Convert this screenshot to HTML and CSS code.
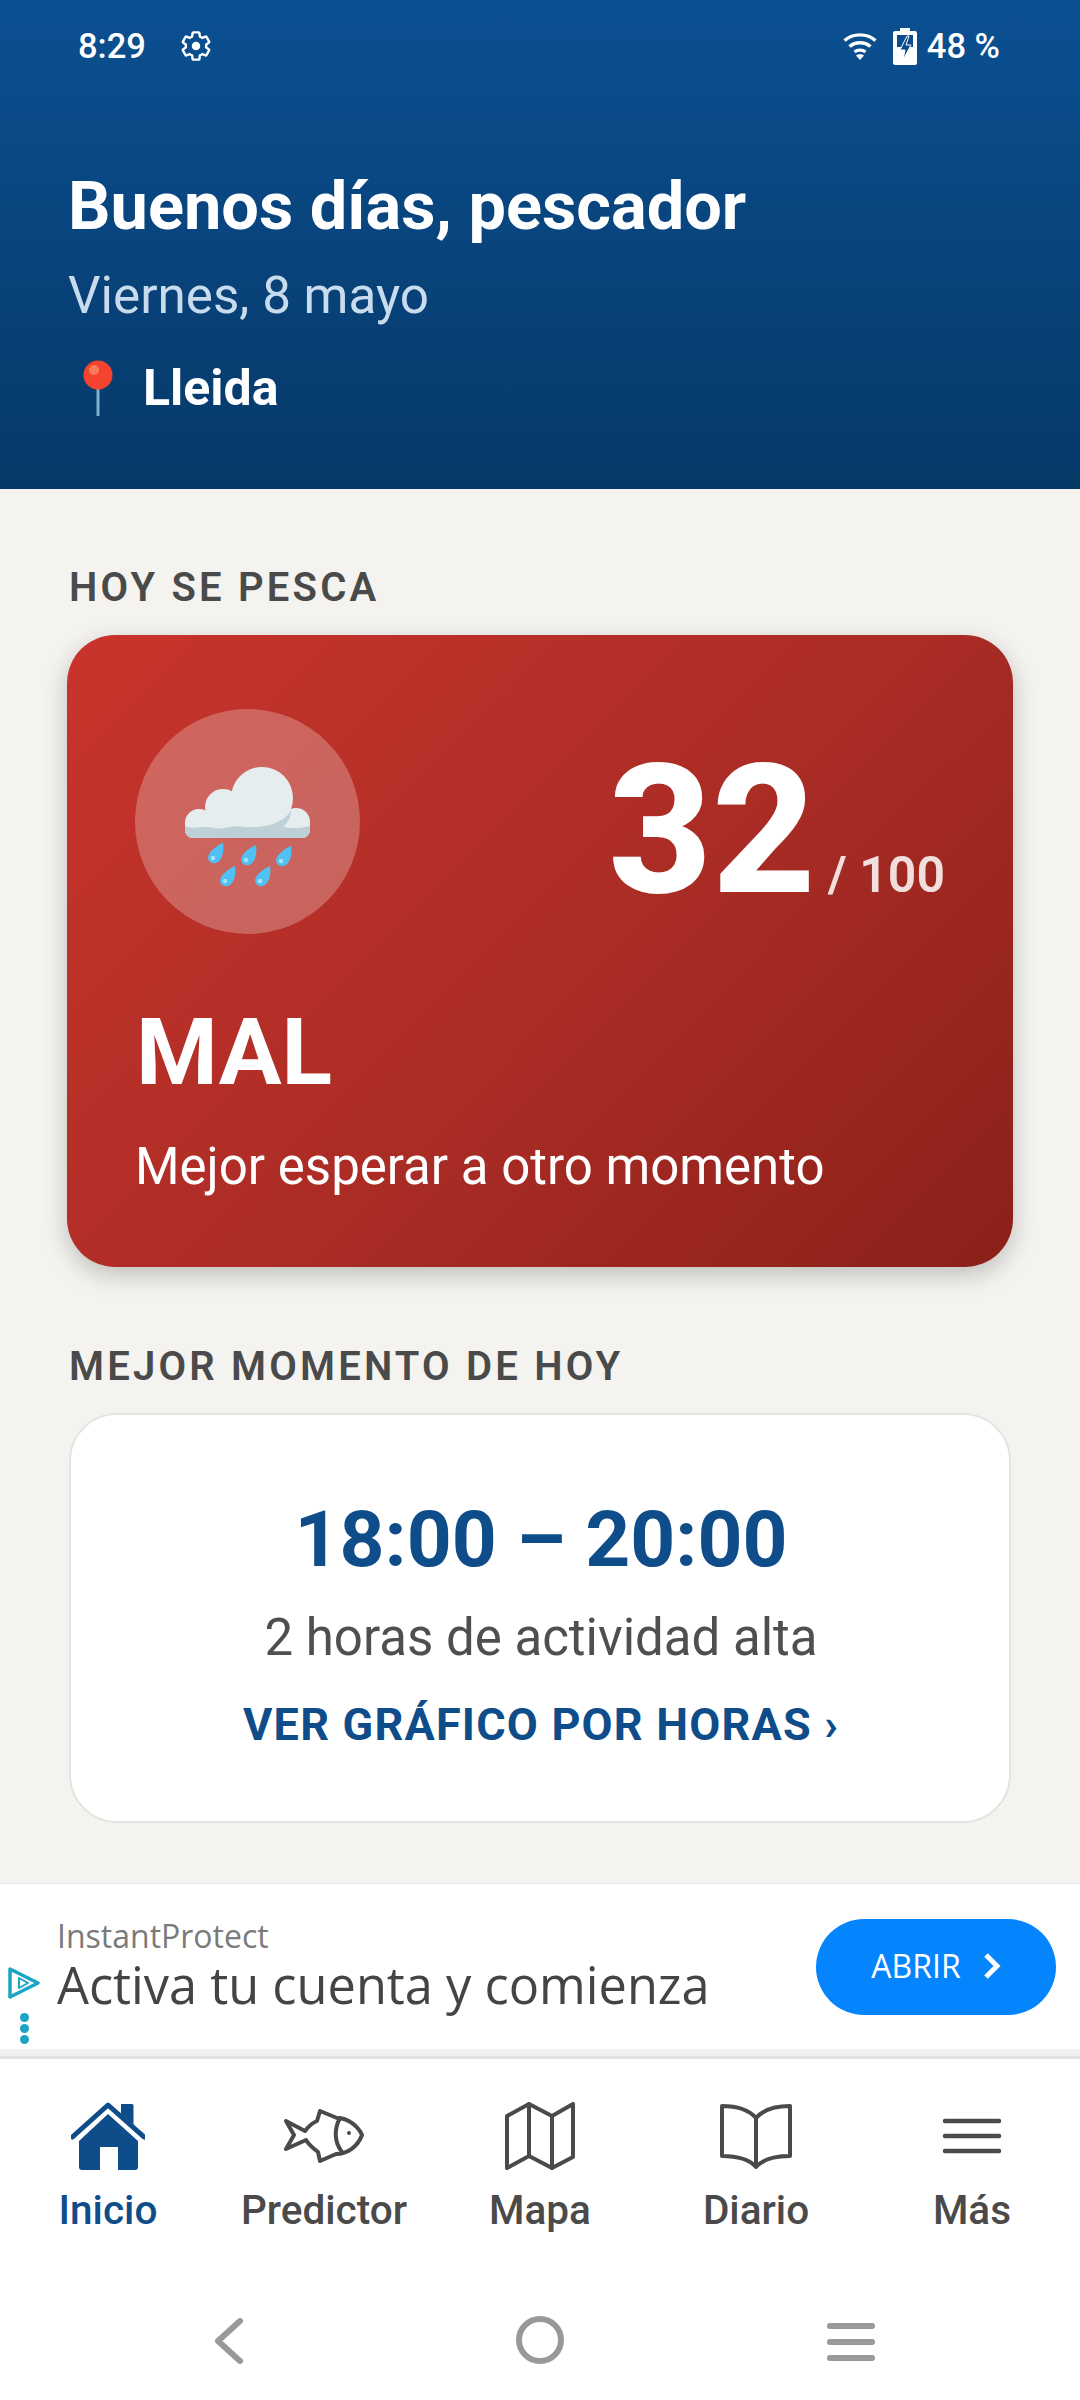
FILE: index.html
```html
<!DOCTYPE html>
<html lang="es">
<head>
  <meta charset="UTF-8" />
  <meta name="viewport" content="width=1080, height=2400" />
  <title>Inicio</title>
  <link rel="stylesheet" href="styles.css">
</head>
<body>
<div class="app">

  <!-- header with status bar -->
  <header class="top">
    <div class="status">
      <div class="status-left">
        <span class="clock">8:29</span>
        <svg class="gear" viewBox="0 0 24 24" fill="none" stroke="currentColor" stroke-width="1.7" stroke-linejoin="round">
          <path d="M19.14 12.94c.04-.3.06-.61.06-.94 0-.32-.02-.64-.07-.94l2.03-1.58c.18-.14.23-.41.12-.61l-1.92-3.32c-.12-.22-.37-.29-.59-.22l-2.39.96c-.5-.38-1.03-.7-1.62-.94l-.36-2.54c-.04-.24-.24-.41-.48-.41h-3.84c-.24 0-.43.17-.47.41l-.36 2.54c-.59.24-1.13.57-1.62.94l-2.39-.96c-.22-.08-.47 0-.59.22L2.74 8.87c-.12.21-.08.47.12.61l2.03 1.58c-.05.3-.09.63-.09.94s.02.64.07.94l-2.03 1.58c-.18.14-.23.41-.12.61l1.92 3.32c.12.22.37.29.59.22l2.39-.96c.5.38 1.03.7 1.62.94l.36 2.54c.05.24.24.41.48.41h3.84c.24 0 .44-.17.47-.41l.36-2.54c.59-.24 1.13-.56 1.62-.94l2.39.96c.22.08.47 0 .59-.22l1.92-3.32c.12-.22.07-.47-.12-.61l-2.01-1.58z"/>
          <circle cx="12" cy="12" r="3" fill="currentColor" stroke="none"/>
        </svg>
      </div>
      <div class="status-right">
        <svg class="wifi" viewBox="0 0 34 28" fill="none" stroke="currentColor" stroke-width="3.4">
          <path d="M1.5 8.5C10 1 24 1 32.5 8.5"/>
          <path d="M6.5 14.5C12.5 9.5 21.5 9.5 27.5 14.5"/>
          <path d="M11.5 20C14.5 17.5 19.5 17.5 22.5 20"/>
          <path d="M17 28l-4-4.5c2-1.6 6-1.6 8 0z" fill="currentColor" stroke="none"/>
        </svg>
        <svg class="battery" viewBox="0 0 24 37">
          <path d="M7 0h10v3h5a2 2 0 0 1 2 2v30a2 2 0 0 1-2 2H2a2 2 0 0 1-2-2V5a2 2 0 0 1 2-2h5z" fill="#fff"/>
          <rect x="4" y="7" width="16" height="12" fill="#0a4c8c"/>
          <path d="M14 8l-7 14h5l-2 10 8-15h-5l3-9z" fill="#0a4c8c" stroke="#fff" stroke-width="1"/>
        </svg>
        <span class="percent">48 %</span>
      </div>
    </div>

    <h1 class="greeting">Buenos días, pescador</h1>
    <p class="date">Viernes, 8 mayo</p>
    <p class="place">
      <svg class="pin" viewBox="0 0 38 56">
        <rect x="17.5" y="22" width="3" height="34" fill="#7fb2c9"/>
        <circle cx="19" cy="15" r="14.5" fill="#f4442e"/>
        <circle cx="15" cy="10" r="5" fill="#ff7a5c"/>
      </svg>
      <span>Lleida</span>
    </p>
  </header>

  <main class="content">
    <h2 class="section-label label-today">HOY SE PESCA</h2>
    <section class="score-card">
      <div class="score-top">
        <div class="weather-circle">
          <svg class="rain" viewBox="0 0 125 121">
            <defs>
              <g id="drop">
                <path d="M15 0C16 6 15 13 12 17 8 22 1 21 0 15 0 9 8 3 15 0z" fill="#4fc1f5"/>
                <circle cx="5" cy="15" r="2.2" fill="#a8e4fb"/>
              </g>
            </defs>
            <circle cx="77" cy="31" r="31" fill="#e6edef"/>
            <circle cx="38" cy="40" r="18" fill="#e6edef"/>
            <circle cx="14" cy="56" r="14" fill="#e6edef"/>
            <circle cx="111" cy="55" r="14" fill="#e6edef"/>
            <rect x="0" y="50" width="125" height="21" rx="8" fill="#e6edef"/>
            <path d="M0 59C8 63 20 58 28 61 40 63 48 57 60 60 78 61 96 58 106 44 106 51 102 56 98 60 108 62 118 61 125 59V63a8 8 0 0 1-8 8H8a8 8 0 0 1-8-8z" fill="#bcd0d5"/>
            <use href="#drop" x="23" y="76"/>
            <use href="#drop" x="56" y="78"/>
            <use href="#drop" x="91" y="79"/>
            <use href="#drop" x="35" y="99"/>
            <use href="#drop" x="70" y="99"/>
          </svg>
        </div>
        <div class="score">
          <span class="score-value">32</span>
          <span class="score-max">/ 100</span>
        </div>
      </div>
      <div class="verdict">MAL</div>
      <p class="verdict-note">Mejor esperar a otro momento</p>
    </section>

    <h2 class="section-label label-best">MEJOR MOMENTO DE HOY</h2>
    <section class="best-card">
      <div class="best-time">18:00 – 20:00</div>
      <p class="best-note">2 horas de actividad alta</p>
      <a class="best-link">VER GRÁFICO POR HORAS ›</a>
    </section>
  </main>

  <!-- ad banner -->
  <aside class="ad">
    <div class="ad-mark">
      <svg class="ad-play" viewBox="0 0 32 32" fill="none" stroke="#1aa5c4" stroke-width="3.5" stroke-linejoin="round">
        <path d="M2 2l28 14L2 30z"/>
        <path d="M11 11l9 5-9 5z" stroke-width="2"/>
      </svg>
      <span class="ad-dot"></span>
      <span class="ad-dot"></span>
      <span class="ad-dot"></span>
    </div>
    <div class="ad-text">
      <div class="ad-brand">InstantProtect</div>
      <div class="ad-title">Activa tu cuenta y comienza</div>
    </div>
    <a class="ad-btn">
      <span>ABRIR</span>
      <svg class="ad-chevron" viewBox="0 0 18 28" fill="none" stroke="#fff" stroke-width="5">
        <path d="M3 3l11 11L3 25"/>
      </svg>
    </a>
  </aside>
  <div class="ad-band"></div>

  <nav class="tabs">
    <a class="tab active">
      <span class="tab-icon">
        <svg class="i-house" viewBox="0 0 74 69">
          <path d="M1.5 35L37 3l36 32" fill="none" stroke="currentColor" stroke-width="5" stroke-linecap="round" stroke-linejoin="round"/>
          <path d="M50 2h11a1.5 1.5 0 0 1 1.5 1.5V23L50 12z" fill="currentColor"/>
          <path d="M37 12L67 39V65a3 3 0 0 1-3 3H47V45H29V68H11a3 3 0 0 1-3-3V39z" fill="currentColor"/>
        </svg>
      </span>
      <span class="tab-label">Inicio</span>
    </a>
    <a class="tab">
      <span class="tab-icon">
        <svg class="i-fish" viewBox="0 0 80 54" fill="none" stroke="currentColor" stroke-width="4" stroke-linejoin="round" stroke-linecap="round">
          <path d="M21 22L2 12 10 26 2 40 22 31C25 36 30 40 34 43L36 52 52 45C64 45 74 37 78 26 74 17 64 9 53 9L36 2 33 12C28 14 24 18 21 22z"/>
          <path d="M56 9C50 20 50 33 58 43"/>
          <circle cx="65" cy="24" r="2" fill="currentColor" stroke="none"/>
        </svg>
      </span>
      <span class="tab-label">Predictor</span>
    </a>
    <a class="tab">
      <span class="tab-icon">
        <svg class="i-map" viewBox="0 0 70 68" fill="none" stroke="currentColor" stroke-width="4" stroke-linejoin="round" stroke-linecap="round">
          <path d="M2 14L24 2 47 14 68 2V55L47 66 24 54 2 66z"/>
          <path d="M24 2V54M47 14V66"/>
        </svg>
      </span>
      <span class="tab-label">Mapa</span>
    </a>
    <a class="tab">
      <span class="tab-icon">
        <svg class="i-book" viewBox="0 0 74 65" fill="none" stroke="currentColor" stroke-width="4" stroke-linejoin="round" stroke-linecap="round">
          <path d="M37 14C30 6 18 2 3 2V52C18 52 30 55 37 63 44 55 56 52 71 52V2C56 2 44 6 37 14V63"/>
        </svg>
      </span>
      <span class="tab-label">Diario</span>
    </a>
    <a class="tab">
      <span class="tab-icon">
        <svg class="i-menu" viewBox="0 0 60 36" fill="none" stroke="currentColor" stroke-width="4.5" stroke-linecap="round">
          <path d="M3 3H57M3 18H57M3 33H57"/>
        </svg>
      </span>
      <span class="tab-label">Más</span>
    </a>
  </nav>

  <!-- android buttons -->
  <div class="system-nav">
    <svg class="sys-back" viewBox="0 0 30 46" fill="none" stroke="#999" stroke-width="6" stroke-linecap="round" stroke-linejoin="round">
      <path d="M26 3L4 23l22 20"/>
    </svg>
    <svg class="sys-home" viewBox="0 0 48 48" fill="none" stroke="#999" stroke-width="6">
      <circle cx="24" cy="24" r="21"/>
    </svg>
    <svg class="sys-menu" viewBox="0 0 48 38" fill="none" stroke="#999" stroke-width="6" stroke-linecap="round">
      <path d="M3 3H45M3 19H45M3 35H45"/>
    </svg>
  </div>

</div>
</body>
</html>
```

FILE: styles.css
```css
/* Reset */
* {
  margin: 0;
  padding: 0;
  box-sizing: border-box;
}

html, body {
  width: 1080px;
  height: 2400px;
  overflow: hidden;
  background: #f4f3ef;
  font-family: 'Roboto', 'Liberation Sans', sans-serif;
}

.app {
  width: 1080px;
  height: 2400px;
  display: flex;
  flex-direction: column;
}

/* Header */
.top {
  height: 489px;
  padding: 28px 68px 0;
  background: linear-gradient(180deg, #0b5092 0%, #063867 100%);
  color: #fff;
}

.status {
  height: 36px;
  display: flex;
  align-items: center;
  justify-content: space-between;
  padding: 0 12px 0 10px;
  font-size: 34.5px;
  font-weight: 500;
}

.status-left,
.status-right {
  display: flex;
  align-items: center;
}

.gear {
  width: 34px;
  height: 34px;
  margin-left: 33px;
}

.wifi {
  width: 34px;
  height: 28px;
}

.battery {
  width: 24px;
  height: 37px;
  margin-left: 16px;
}

.percent {
  margin-left: 10px;
}

.greeting {
  margin-top: 103px;
  font-size: 66.7px;
  line-height: 78px;
  font-weight: 700;
}

.date {
  margin-top: 24px;
  font-size: 51.2px;
  line-height: 54px;
  font-weight: 400;
  color: #c9dcee;
}

.place {
  margin-top: 37px;
  display: flex;
  align-items: center;
  gap: 26px;
  padding-left: 11px;
  font-size: 50px;
  line-height: 54px;
  font-weight: 700;
}

.pin {
  width: 38px;
  height: 56px;
}

/* Main */
.content {
  padding: 0 67px;
}

.section-label {
  font-size: 40px;
  line-height: 42px;
  font-weight: 600;
  letter-spacing: 3.2px;
  color: #4a4a4a;
  padding-left: 2px;
}

.label-today {
  margin-top: 78px;
  margin-bottom: 26px;
}

.label-best {
  margin-top: 79px;
  margin-bottom: 25px;
}

/* Red score card */
.score-card {
  height: 632px;
  padding: 74px 68px 0;
  border-radius: 48px;
  background: linear-gradient(135deg, #c9342c 0%, #a92c25 55%, #8b2019 100%);
  box-shadow: 0 8px 24px rgba(0, 0, 0, 0.22);
  color: #fff;
}

.score-top {
  display: flex;
  justify-content: space-between;
  align-items: flex-start;
}

.weather-circle {
  width: 225px;
  height: 225px;
  border-radius: 50%;
  background: rgba(255, 255, 255, 0.25);
  display: flex;
  align-items: flex-start;
  justify-content: center;
  padding-top: 58px;
}

.rain {
  width: 125px;
  height: 121px;
}

.score {
  margin-top: 32px;
  display: flex;
  align-items: baseline;
  gap: 12px;
}

.score-value {
  font-size: 180px;
  line-height: 180px;
  font-weight: 800;
}

.score-max {
  font-size: 50px;
  font-weight: 600;
  color: rgba(255, 255, 255, 0.85);
}

.verdict {
  margin-top: 64px;
  padding-left: 1px;
  font-size: 93.5px;
  line-height: 108px;
  font-weight: 700;
}

.verdict-note {
  margin-top: 34px;
  font-size: 51px;
  line-height: 54px;
}

/* Best moment card */
.best-card {
  height: 410px;
  margin: 0 2px;
  padding: 77px 0 0 2px;
  background: #fff;
  border: 2px solid #e4e4e1;
  border-radius: 48px;
  text-align: center;
}

.best-time {
  font-size: 78.5px;
  line-height: 94px;
  font-weight: 700;
  color: #0f4c8a;
}

.best-note {
  margin-top: 24px;
  font-size: 51px;
  line-height: 56px;
  color: #4f4f4f;
}

.best-link {
  display: block;
  margin-top: 33px;
  font-size: 45px;
  line-height: 52px;
  font-weight: 700;
  letter-spacing: 1.2px;
  color: #0f4c8a;
}

/* Ad */
.ad {
  margin-top: 60px;
  height: 166px;
  display: flex;
  align-items: center;
  background: #fff;
  border-top: 1px solid #e8e8e5;
  font-family: 'Open Sans', sans-serif;
}

.ad-mark {
  width: 57px;
  height: 100%;
  flex-shrink: 0;
  display: flex;
  flex-direction: column;
  align-items: center;
  justify-content: flex-end;
  padding-bottom: 4px;
  padding-right: 33px;
}

.ad-play {
  width: 32px;
  height: 32px;
  flex-shrink: 0;
  margin-bottom: 13px;
  margin-left: 23px;
}

.ad-dot {
  width: 9px;
  height: 9px;
  border-radius: 50%;
  background: #1aa5c4;
  margin: 1px 0 1px 24px;
  flex-shrink: 0;
}

.ad-text {
  flex: 1;
  padding-bottom: 1px;
}

.ad-brand {
  font-size: 32px;
  line-height: 38px;
  color: #7a7a7a;
}

.ad-title {
  font-size: 50.5px;
  line-height: 60px;
  color: #444;
}

.ad-btn {
  width: 240px;
  height: 96px;
  margin-right: 24px;
  padding-bottom: 2px;
  border-radius: 48px;
  background: #0585fd;
  color: #fff;
  display: flex;
  align-items: center;
  justify-content: center;
  gap: 22px;
  font-size: 32px;
}

.ad-chevron {
  width: 18px;
  height: 28px;
}

.ad-band {
  height: 10px;
  background: #f1f1ef;
  border-bottom: 3px solid #e4e4e4;
}

/* Bottom tabs */
.tabs {
  display: grid;
  grid-template-columns: repeat(5, 1fr);
  padding-top: 42px;
  background: #fff;
  color: #4a4a4a;
}

.tab {
  display: flex;
  flex-direction: column;
  align-items: center;
}

.tab.active {
  color: #0f4c8a;
}

.tab-icon {
  height: 70px;
  display: flex;
  align-items: center;
  justify-content: center;
}

.tab-label {
  margin-top: 17px;
  font-size: 40.5px;
  line-height: 44px;
  font-weight: 500;
}

.i-house { width: 74px; height: 69px; }
.i-fish { width: 80px; height: 54px; }
.i-map { width: 70px; height: 68px; }
.i-book { width: 74px; height: 65px; }
.i-menu { width: 60px; height: 36px; }

/* System nav */
.system-nav {
  flex: 1;
  display: grid;
  grid-template-columns: repeat(3, 311px);
  justify-content: center;
  justify-items: center;
  align-items: start;
  padding-top: 80px;
  background: #fff;
}

.sys-back { width: 30px; height: 46px; margin-top: 6px; }
.sys-home { width: 48px; height: 48px; margin-top: 4px; }
.sys-menu { width: 48px; height: 38px; margin-top: 11px; }
```
